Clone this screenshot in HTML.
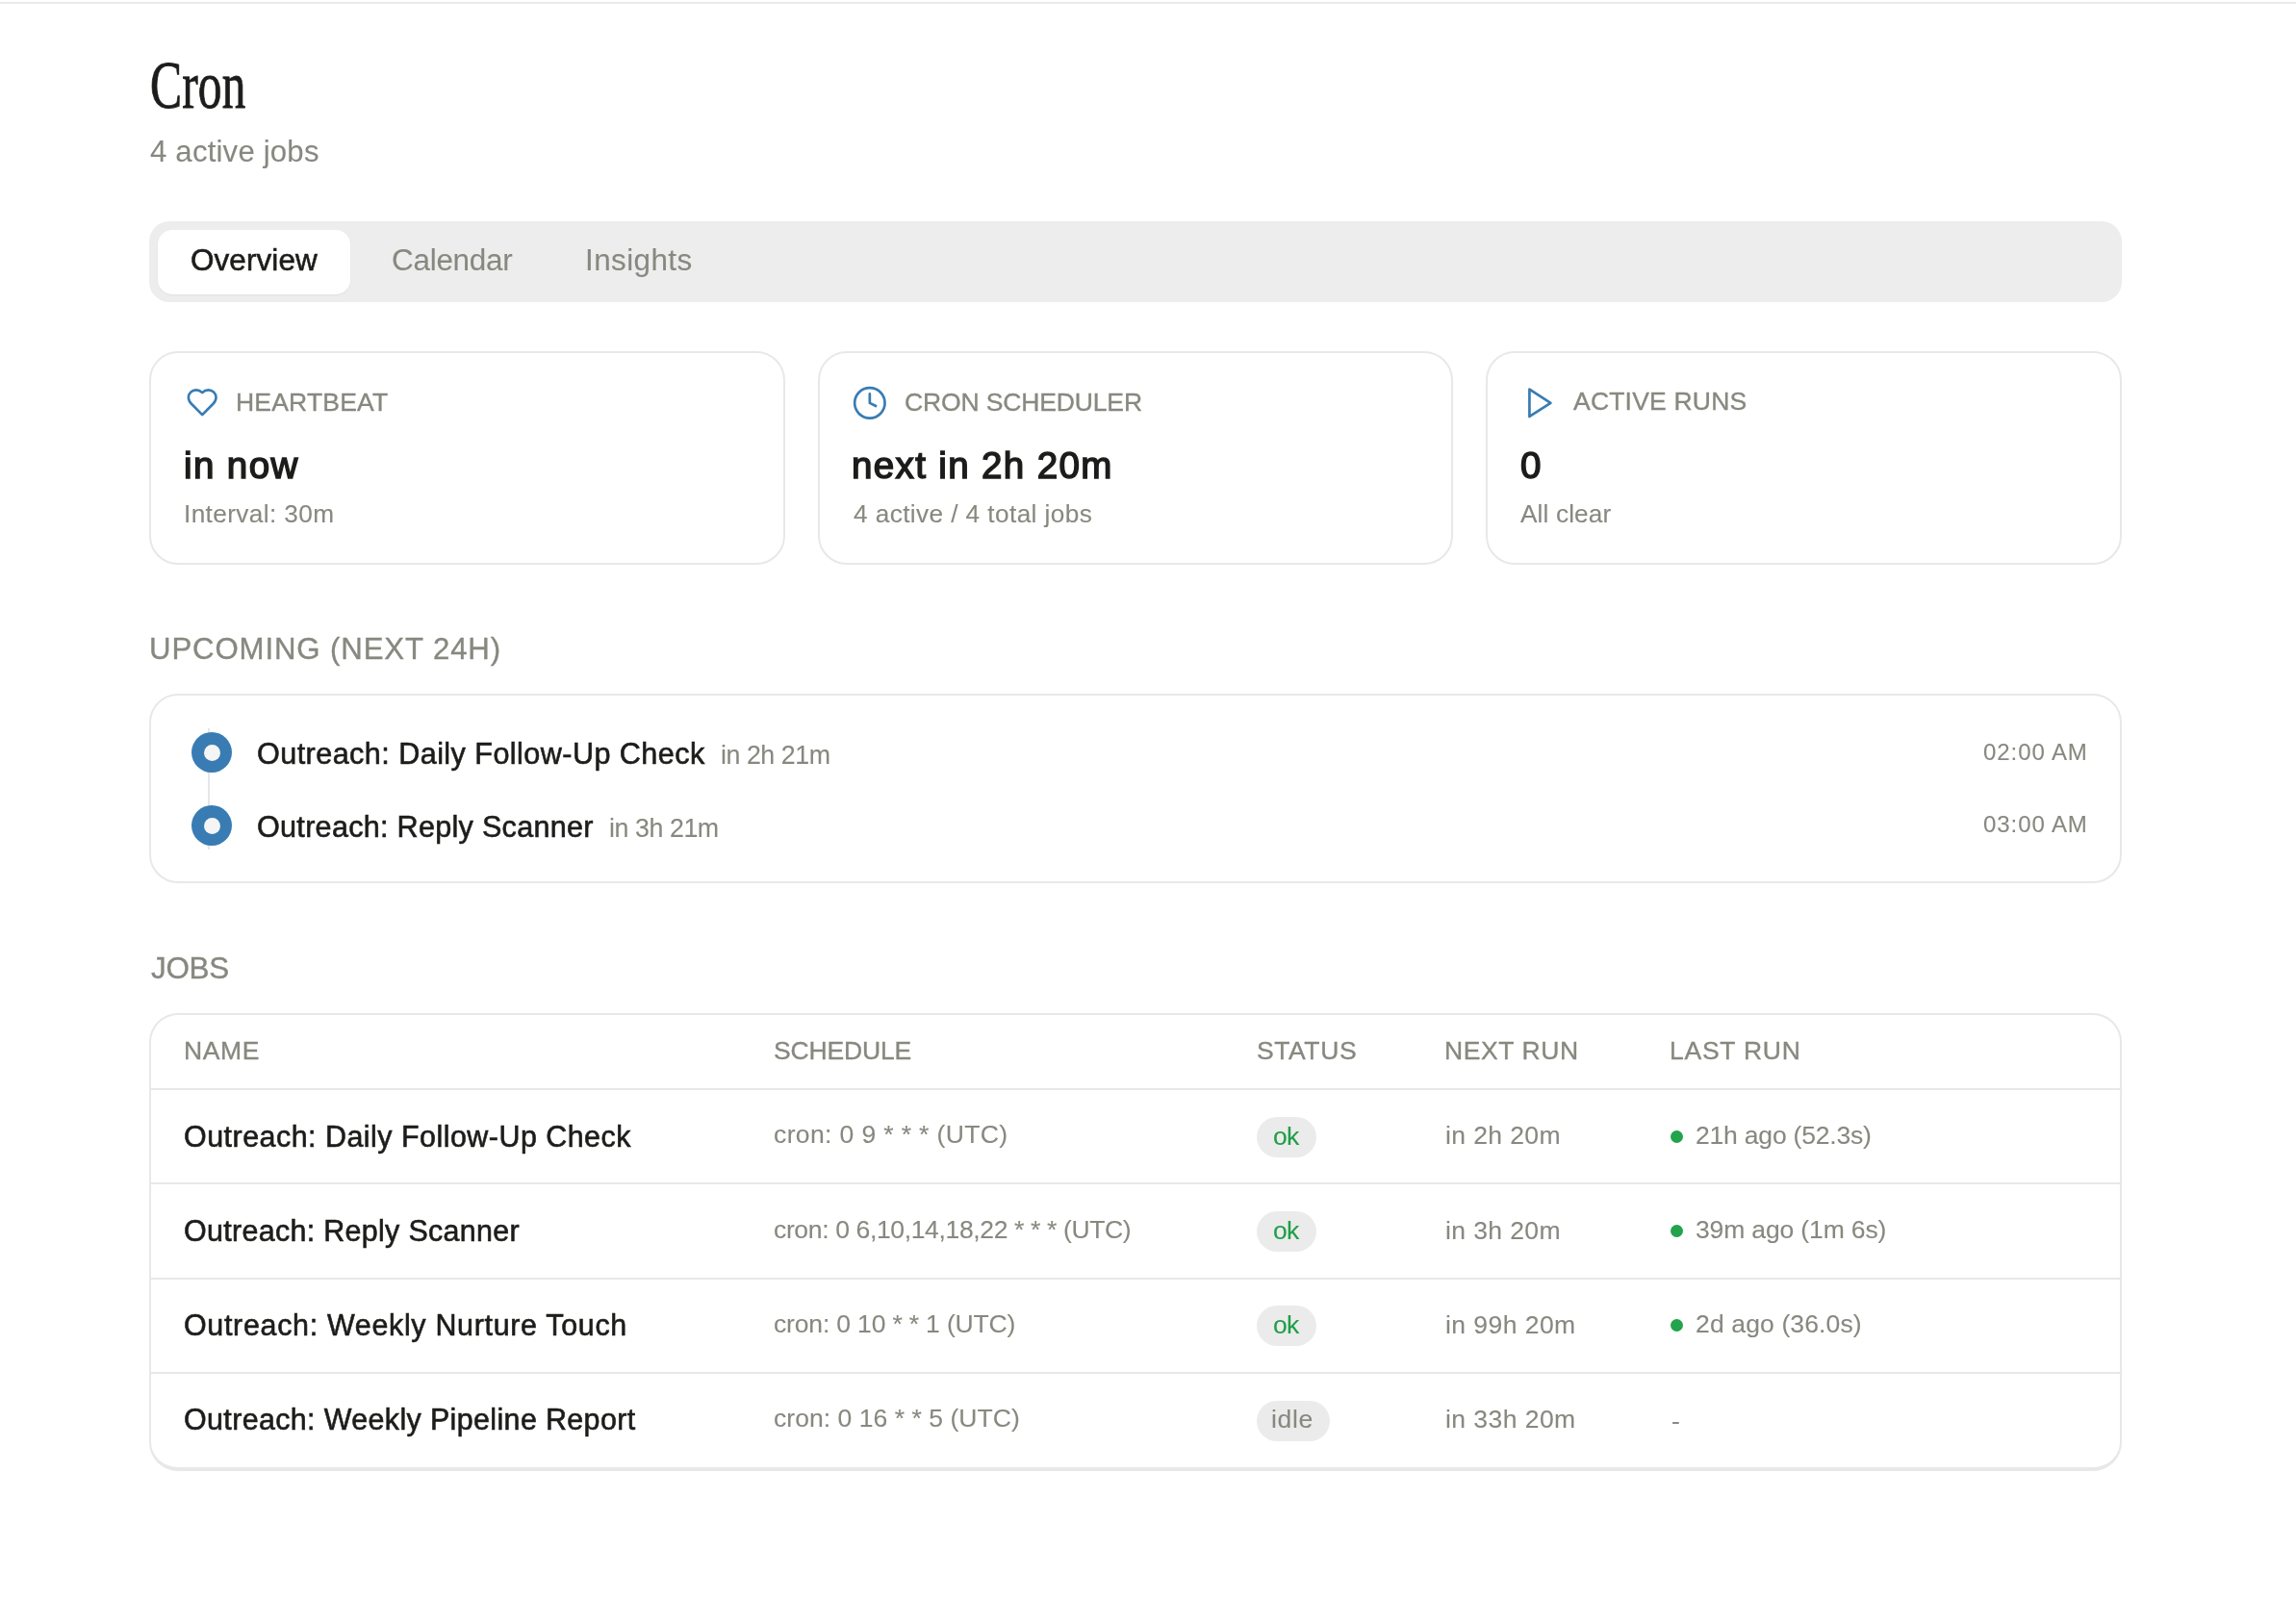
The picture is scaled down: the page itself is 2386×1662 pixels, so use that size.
<!DOCTYPE html>
<html><head><meta charset="utf-8"><title>Cron</title>
<style>
*{box-sizing:border-box;margin:0;padding:0}
html,body{width:2386px;height:1662px;overflow:hidden;background:#ffffff}
body{position:relative;font-family:"Liberation Sans",sans-serif;color:#1c1c1a}
.t{position:absolute;white-space:nowrap;line-height:1;will-change:transform}
.bx{position:absolute;border:2px solid #e8e8e8}
.hl{position:absolute;height:2px;background:#e8e8e8}
svg{position:absolute;overflow:visible}
</style></head><body>

<div style="position:absolute;left:0;top:2px;width:2386px;height:2px;background:#e9e9e9"></div>
<div style="position:absolute;left:155px;top:230px;width:2050px;height:84px;background:#ededed;border-radius:21px"></div>
<div style="position:absolute;left:164px;top:239px;width:200px;height:67px;background:#fff;border-radius:15px;box-shadow:0 1px 2px rgba(0,0,0,0.05)"></div>
<div class="bx" style="left:155px;top:365px;width:660.7px;height:222px;border-radius:30px"></div>
<div class="bx" style="left:849.7px;top:365px;width:660.6px;height:222px;border-radius:30px"></div>
<div class="bx" style="left:1544.3px;top:365px;width:660.7px;height:222px;border-radius:30px"></div>
<div class="bx" style="left:155px;top:721px;width:2050px;height:197px;border-radius:30px"></div>
<div style="position:absolute;left:216px;top:757px;width:2px;height:126px;background:#e6e6e6"></div>
<div style="position:absolute;left:199px;top:761.0px;width:42px;height:42px;border-radius:50%;background:#387cb3"></div>
<div style="position:absolute;left:211.5px;top:773.5px;width:17px;height:17px;border-radius:50%;background:#f5f5f5"></div>
<div style="position:absolute;left:199px;top:837.0px;width:42px;height:42px;border-radius:50%;background:#387cb3"></div>
<div style="position:absolute;left:211.5px;top:849.5px;width:17px;height:17px;border-radius:50%;background:#f5f5f5"></div>
<div class="bx" style="left:155px;top:1053px;width:2050px;height:476px;border-radius:30px;border-bottom-width:4px"></div>
<div class="hl" style="left:157px;top:1131px;width:2046px"></div>
<div class="hl" style="left:157px;top:1229px;width:2046px"></div>
<div class="hl" style="left:157px;top:1328px;width:2046px"></div>
<div class="hl" style="left:157px;top:1426px;width:2046px"></div>
<div style="position:absolute;left:1306px;top:1161.0px;width:62px;height:42px;border-radius:21px;background:#ebebeb"></div>
<div style="position:absolute;left:1736px;top:1174.5px;width:13px;height:13px;border-radius:50%;background:#22a34c"></div>
<div style="position:absolute;left:1306px;top:1259.2px;width:62px;height:42px;border-radius:21px;background:#ebebeb"></div>
<div style="position:absolute;left:1736px;top:1272.7px;width:13px;height:13px;border-radius:50%;background:#22a34c"></div>
<div style="position:absolute;left:1306px;top:1357.4px;width:62px;height:42px;border-radius:21px;background:#ebebeb"></div>
<div style="position:absolute;left:1736px;top:1370.9px;width:13px;height:13px;border-radius:50%;background:#22a34c"></div>
<div style="position:absolute;left:1306px;top:1455.6px;width:76px;height:42px;border-radius:21px;background:#ebebeb"></div>
<svg style="left:192.7px;top:401.4px" width="34.39" height="34.39" viewBox="0 0 24 24" fill="none" stroke="#387cb3" stroke-width="1.88" stroke-linecap="round" stroke-linejoin="round"><path d="M19 14c1.49-1.46 3-3.21 3-5.5A5.5 5.5 0 0 0 16.5 3c-1.76 0-3 .5-4.5 2-1.5-1.5-2.74-2-4.5-2A5.5 5.5 0 0 0 2 8.5c0 2.3 1.5 4.05 3 5.5l7 7Z"/></svg>
<svg style="left:885px;top:400px" width="37.70" height="37.70" viewBox="0 0 24 24" fill="none" stroke="#387cb3" stroke-width="1.72" stroke-linecap="round" stroke-linejoin="round"><circle cx="12" cy="12" r="10"/><polyline points="12 6 12 12 16 14"/></svg>
<svg style="left:1580px;top:400px" width="37.70" height="37.70" viewBox="0 0 24 24" fill="none" stroke="#387cb3" stroke-width="1.72" stroke-linecap="round" stroke-linejoin="round"><polygon points="6 3 20 12 6 21 6 3"/></svg>
<div class="t" style="left:156px;top:55px;font-family:'Liberation Serif',serif;font-size:69px;transform:scaleX(0.72);transform-origin:0 0;color:#1c1c1a;-webkit-text-stroke:0.8px #1c1c1a">Cron</div>
<div class="t" style="left:156.0px;top:142.3px;font-size:31.16px;letter-spacing:0.19px;color:#87887f;-webkit-text-stroke:0.1px #87887f">4 active jobs</div>
<div class="t" style="left:197.8px;top:255.3px;font-size:31.45px;letter-spacing:0.10px;color:#1c1c1a;-webkit-text-stroke:0.6px #1c1c1a">Overview</div>
<div class="t" style="left:406.7px;top:255.3px;font-size:31.45px;letter-spacing:-0.26px;color:#87887f;-webkit-text-stroke:0.1px #87887f">Calendar</div>
<div class="t" style="left:607.5px;top:255.3px;font-size:31.45px;letter-spacing:0.41px;color:#87887f;-webkit-text-stroke:0.1px #87887f">Insights</div>
<div class="t" style="left:245.2px;top:404.6px;font-size:26.52px;letter-spacing:0.19px;color:#87887f;-webkit-text-stroke:0.35px #87887f">HEARTBEAT</div>
<div class="t" style="left:940.1px;top:404.7px;font-size:26.52px;letter-spacing:-0.15px;color:#87887f;-webkit-text-stroke:0.35px #87887f">CRON SCHEDULER</div>
<div class="t" style="left:1635.1px;top:404.4px;font-size:26.52px;letter-spacing:0.19px;color:#87887f;-webkit-text-stroke:0.35px #87887f">ACTIVE RUNS</div>
<div class="t" style="left:190.9px;top:465.3px;font-size:38.55px;letter-spacing:1.38px;color:#1c1c1a;-webkit-text-stroke:1.5px #1c1c1a">in now</div>
<div class="t" style="left:885.2px;top:465.2px;font-size:38.55px;letter-spacing:1.35px;color:#1c1c1a;-webkit-text-stroke:1.5px #1c1c1a">next in 2h 20m</div>
<div class="t" style="left:1580.1px;top:465.2px;font-size:38.55px;letter-spacing:0.00px;color:#1c1c1a;-webkit-text-stroke:1.5px #1c1c1a">0</div>
<div class="t" style="left:190.9px;top:520.6px;font-size:26.23px;letter-spacing:0.37px;color:#87887f;-webkit-text-stroke:0.1px #87887f">Interval: 30m</div>
<div class="t" style="left:887.0px;top:520.9px;font-size:26.23px;letter-spacing:0.40px;color:#87887f;-webkit-text-stroke:0.1px #87887f">4 active / 4 total jobs</div>
<div class="t" style="left:1580.4px;top:520.7px;font-size:26.23px;letter-spacing:0.12px;color:#87887f;-webkit-text-stroke:0.1px #87887f">All clear</div>
<div class="t" style="left:154.8px;top:658.7px;font-size:31.16px;letter-spacing:0.89px;color:#87887f;-webkit-text-stroke:0.35px #87887f">UPCOMING (NEXT 24H)</div>
<div class="t" style="left:266.6px;top:768.0px;font-size:30.58px;letter-spacing:0.44px;color:#1c1c1a;-webkit-text-stroke:0.6px #1c1c1a">Outreach: Daily Follow-Up Check</div>
<div class="t" style="left:748.7px;top:771.6px;font-size:26.81px;letter-spacing:-0.46px;color:#87887f;-webkit-text-stroke:0.1px #87887f">in 2h 21m</div>
<div class="t" style="left:266.6px;top:844.2px;font-size:30.58px;letter-spacing:0.28px;color:#1c1c1a;-webkit-text-stroke:0.6px #1c1c1a">Outreach: Reply Scanner</div>
<div class="t" style="left:632.6px;top:847.7px;font-size:26.81px;letter-spacing:-0.44px;color:#87887f;-webkit-text-stroke:0.1px #87887f">in 3h 21m</div>
<div class="t" style="left:2061.4px;top:769.6px;font-size:24.06px;letter-spacing:0.90px;color:#87887f;-webkit-text-stroke:0.1px #87887f">02:00 AM</div>
<div class="t" style="left:2061.4px;top:844.5px;font-size:24.06px;letter-spacing:0.90px;color:#87887f;-webkit-text-stroke:0.1px #87887f">03:00 AM</div>
<div class="t" style="left:156.5px;top:990.6px;font-size:31.45px;letter-spacing:-0.33px;color:#87887f;-webkit-text-stroke:0.35px #87887f">JOBS</div>
<div class="t" style="left:190.7px;top:1078.7px;font-size:26.52px;letter-spacing:0.60px;color:#87887f;-webkit-text-stroke:0.35px #87887f">NAME</div>
<div class="t" style="left:804.4px;top:1078.8px;font-size:26.52px;letter-spacing:-0.17px;color:#87887f;-webkit-text-stroke:0.35px #87887f">SCHEDULE</div>
<div class="t" style="left:1306.0px;top:1078.7px;font-size:26.52px;letter-spacing:0.58px;color:#87887f;-webkit-text-stroke:0.35px #87887f">STATUS</div>
<div class="t" style="left:1501.0px;top:1078.7px;font-size:26.52px;letter-spacing:0.57px;color:#87887f;-webkit-text-stroke:0.35px #87887f">NEXT RUN</div>
<div class="t" style="left:1735.4px;top:1078.7px;font-size:26.52px;letter-spacing:0.74px;color:#87887f;-webkit-text-stroke:0.35px #87887f">LAST RUN</div>
<div class="t" style="left:191.0px;top:1165.6px;font-size:30.43px;letter-spacing:0.49px;color:#1c1c1a;-webkit-text-stroke:0.6px #1c1c1a">Outreach: Daily Follow-Up Check</div>
<div class="t" style="left:804.3px;top:1166.3px;font-size:26.52px;letter-spacing:0.37px;color:#87887f;-webkit-text-stroke:0.1px #87887f">cron: 0 9 * * * (UTC)</div>
<div class="t" style="left:1501.5px;top:1167.4px;font-size:26.52px;letter-spacing:0.38px;color:#87887f;-webkit-text-stroke:0.1px #87887f">in 2h 20m</div>
<div class="t" style="left:1322.9px;top:1167.6px;font-size:26.52px;letter-spacing:-0.70px;color:#1f9e48;-webkit-text-stroke:0.1px #1f9e48">ok</div>
<div class="t" style="left:1761.7px;top:1167.0px;font-size:26.52px;letter-spacing:-0.20px;color:#87887f;-webkit-text-stroke:0.1px #87887f">21h ago (52.3s)</div>
<div class="t" style="left:191.0px;top:1263.8px;font-size:30.43px;letter-spacing:0.32px;color:#1c1c1a;-webkit-text-stroke:0.6px #1c1c1a">Outreach: Reply Scanner</div>
<div class="t" style="left:804.3px;top:1264.5px;font-size:26.52px;letter-spacing:-0.36px;color:#87887f;-webkit-text-stroke:0.1px #87887f">cron: 0 6,10,14,18,22 * * * (UTC)</div>
<div class="t" style="left:1501.5px;top:1265.6px;font-size:26.52px;letter-spacing:0.38px;color:#87887f;-webkit-text-stroke:0.1px #87887f">in 3h 20m</div>
<div class="t" style="left:1322.9px;top:1265.8px;font-size:26.52px;letter-spacing:-0.70px;color:#1f9e48;-webkit-text-stroke:0.1px #1f9e48">ok</div>
<div class="t" style="left:1761.7px;top:1265.2px;font-size:26.52px;letter-spacing:-0.15px;color:#87887f;-webkit-text-stroke:0.1px #87887f">39m ago (1m 6s)</div>
<div class="t" style="left:191.0px;top:1362.0px;font-size:30.43px;letter-spacing:0.69px;color:#1c1c1a;-webkit-text-stroke:0.6px #1c1c1a">Outreach: Weekly Nurture Touch</div>
<div class="t" style="left:804.3px;top:1362.7px;font-size:26.52px;letter-spacing:-0.17px;color:#87887f;-webkit-text-stroke:0.1px #87887f">cron: 0 10 * * 1 (UTC)</div>
<div class="t" style="left:1501.5px;top:1363.8px;font-size:26.52px;letter-spacing:0.44px;color:#87887f;-webkit-text-stroke:0.1px #87887f">in 99h 20m</div>
<div class="t" style="left:1322.9px;top:1364.0px;font-size:26.52px;letter-spacing:-0.70px;color:#1f9e48;-webkit-text-stroke:0.1px #1f9e48">ok</div>
<div class="t" style="left:1761.7px;top:1363.4px;font-size:26.52px;letter-spacing:0.13px;color:#87887f;-webkit-text-stroke:0.1px #87887f">2d ago (36.0s)</div>
<div class="t" style="left:191.0px;top:1460.2px;font-size:30.43px;letter-spacing:0.37px;color:#1c1c1a;-webkit-text-stroke:0.6px #1c1c1a">Outreach: Weekly Pipeline Report</div>
<div class="t" style="left:804.3px;top:1460.9px;font-size:26.52px;letter-spacing:0.04px;color:#87887f;-webkit-text-stroke:0.1px #87887f">cron: 0 16 * * 5 (UTC)</div>
<div class="t" style="left:1501.5px;top:1462.0px;font-size:26.52px;letter-spacing:0.44px;color:#87887f;-webkit-text-stroke:0.1px #87887f">in 33h 20m</div>
<div class="t" style="left:1321.3px;top:1462.2px;font-size:26.52px;letter-spacing:0.67px;color:#87887f;-webkit-text-stroke:0.1px #87887f">idle</div>
<div class="t" style="left:1737.0px;top:1463.6px;font-size:26.52px;letter-spacing:0.00px;color:#87887f;-webkit-text-stroke:0.1px #87887f">-</div>
</body></html>
